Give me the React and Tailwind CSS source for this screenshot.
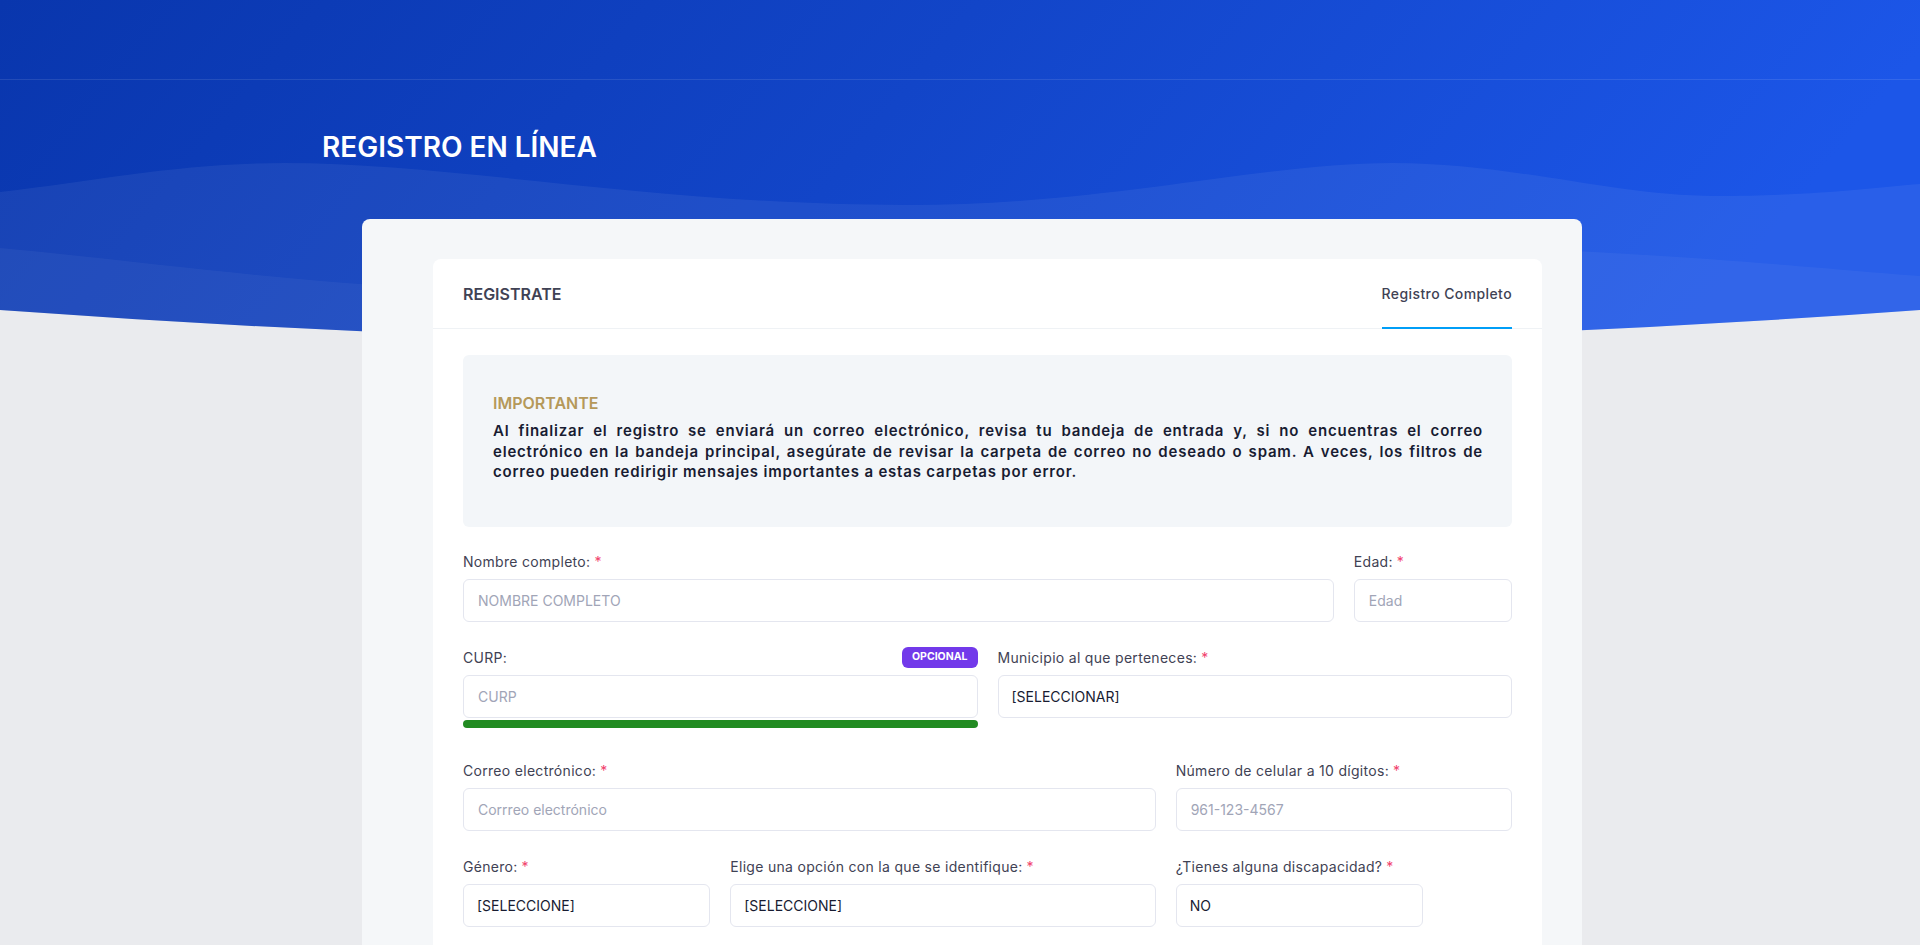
import React from "react";

// fondo azul con ondas del encabezado
function HeaderBg() {
  return (
    <svg className="absolute top-0 left-0 w-full h-[350px]" viewBox="0 0 1903 350" preserveAspectRatio="none">
      <defs>
        <linearGradient id="bgGrad" x1="0" y1="0" x2="1" y2="0.15">
          <stop offset="0" stopColor="#0936ad" />
          <stop offset="0.5" stopColor="#1245c8" />
          <stop offset="1" stopColor="#1c56e8" />
        </linearGradient>
        <clipPath id="bgClip">
          <path d="M0 0H1903V310Q951 380 0 310Z" />
        </clipPath>
      </defs>
      <g clipPath="url(#bgClip)">
        <rect width="1903" height="350" fill="url(#bgGrad)" />
        <path
          d="M0 192C100 180 180 163 282 163C450 163 650 205 900 205C1100 205 1250 163 1380 163C1500 163 1600 196 1700 196C1800 196 1850 188 1903 184V350H0Z"
          fill="#ffffff"
          fillOpacity="0.06"
        />
        <path
          d="M0 248C150 262 300 285 500 292C800 300 1100 250 1400 246C1600 248 1800 268 1903 276V350H0Z"
          fill="#ffffff"
          fillOpacity="0.045"
        />
      </g>
    </svg>
  );
}

function Label({ children, required }) {
  return (
    <label className="block h-[21px] mb-[7px] text-[14px] leading-[21px] tracking-[0.3px] text-[#3f4254]">
      {children}
      {required && <span className="ml-1 text-[#f1416c]">*</span>}
    </label>
  );
}

function TextInput({ placeholder }) {
  return (
    <input
      type="text"
      placeholder={placeholder}
      className="block w-full h-[43px] px-[14px] rounded-[6px] border border-[#e4e6ef] bg-white text-[14px] text-[#181c32] placeholder:text-[#a1a5b7] outline-none"
    />
  );
}

function Select({ value }) {
  return (
    <select
      defaultValue={value}
      className="block w-full h-[43px] px-[13px] rounded-[6px] border border-[#e4e6ef] bg-white text-[14px] text-[#181c32] appearance-none outline-none"
    >
      <option value={value}>{value}</option>
    </select>
  );
}

function App() {
  return (
    <div className="relative min-h-[1710px] bg-[#eaebee] font-['Inter','Noto_Sans',sans-serif]">
      <HeaderBg />

      <div className="relative">
        <div className="h-[80px] border-b border-white/10" />

        <div className="pl-[322px] pt-[50px]">
          <h1 className="text-[28px] leading-[34px] font-semibold text-white">REGISTRO EN LÍNEA</h1>
        </div>

        <div className="ml-[362px] mt-[55px] w-[1220px] rounded-[8px] bg-[#f5f7f9] pl-[71px] pr-[40px] pt-[40px] pb-[40px]">
          <div className="rounded-[8px] bg-white">
            {/* encabezado */}
            <div className="flex justify-between h-[70px] px-[30px] border-b border-[#eff2f5]">
              <div className="flex items-center text-[16px] font-semibold text-[#3f4254]">REGISTRATE</div>
              <div className="flex items-center -mb-px border-b-2 border-[#009ef7] text-[14px] font-medium tracking-[0.4px] text-[#3f4254]">
                Registro Completo
              </div>
            </div>

            <div className="px-[30px] pt-[26px] pb-[30px]">
              {/* aviso */}
              <div className="mb-6 rounded-[6px] bg-[#f3f6f9] pl-[30px] pr-[29px] pt-[36px] pb-[44px]">
                <h4 className="mb-[6px] text-[16px] leading-[24px] font-semibold text-[#b5995a]">IMPORTANTE</h4>
                <div className="text-[15px] leading-[20.5px] font-semibold tracking-[0.8px] text-[#181c32]">
                  <p className="whitespace-nowrap text-justify [text-align-last:justify]">
                    Al finalizar el registro se enviará un correo electrónico, revisa tu bandeja de entrada y, si no encuentras el correo
                  </p>
                  <p className="whitespace-nowrap text-justify [text-align-last:justify]">
                    electrónico en la bandeja principal, asegúrate de revisar la carpeta de correo no deseado o spam. A veces, los filtros de
                  </p>
                  <p>correo pueden redirigir mensajes importantes a estas carpetas por error.</p>
                </div>
              </div>

              <div className="grid grid-cols-12 gap-x-5">
                <div className="col-span-10 mb-[25px]">
                  <Label required>Nombre completo:</Label>
                  <TextInput placeholder="NOMBRE COMPLETO" />
                </div>
                <div className="col-span-2 mb-[25px]">
                  <Label required>Edad:</Label>
                  <TextInput placeholder="Edad" />
                </div>

                <div className="col-span-6 mb-[25px]">
                  <div className="flex items-center justify-between h-[21px] mb-[7px]">
                    <span className="text-[14px] leading-[21px] tracking-[0.3px] text-[#3f4254]">CURP:</span>
                    <span className="flex items-center h-[21px] px-[10px] rounded-[6px] bg-[#7239ea] text-[10.5px] font-bold text-white">
                      OPCIONAL
                    </span>
                  </div>
                  <TextInput placeholder="CURP" />
                  <div className="mt-[2px] mb-[7px] h-2 rounded-full bg-[#228b22]" />
                </div>
                <div className="col-span-6 mb-[25px]">
                  <Label required>Municipio al que perteneces:</Label>
                  <Select value="[SELECCIONAR]" />
                </div>

                <div className="col-span-8 mb-[25px]">
                  <Label required>Correo electrónico:</Label>
                  <TextInput placeholder="Corrreo electrónico" />
                </div>
                <div className="col-span-4 mb-[25px]">
                  <Label required>Número de celular a 10 dígitos:</Label>
                  <TextInput placeholder="961-123-4567" />
                </div>

                <div className="col-span-3 mb-[25px]">
                  <Label required>Género:</Label>
                  <Select value="[SELECCIONE]" />
                </div>
                <div className="col-span-5 mb-[25px]">
                  <Label required>Elige una opción con la que se identifique:</Label>
                  <Select value="[SELECCIONE]" />
                </div>
                <div className="col-span-3 mb-[25px]">
                  <Label required>¿Tienes alguna discapacidad?</Label>
                  <Select value="NO" />
                </div>
              </div>
            </div>
          </div>
        </div>
      </div>
    </div>
  );
}

export default App;
